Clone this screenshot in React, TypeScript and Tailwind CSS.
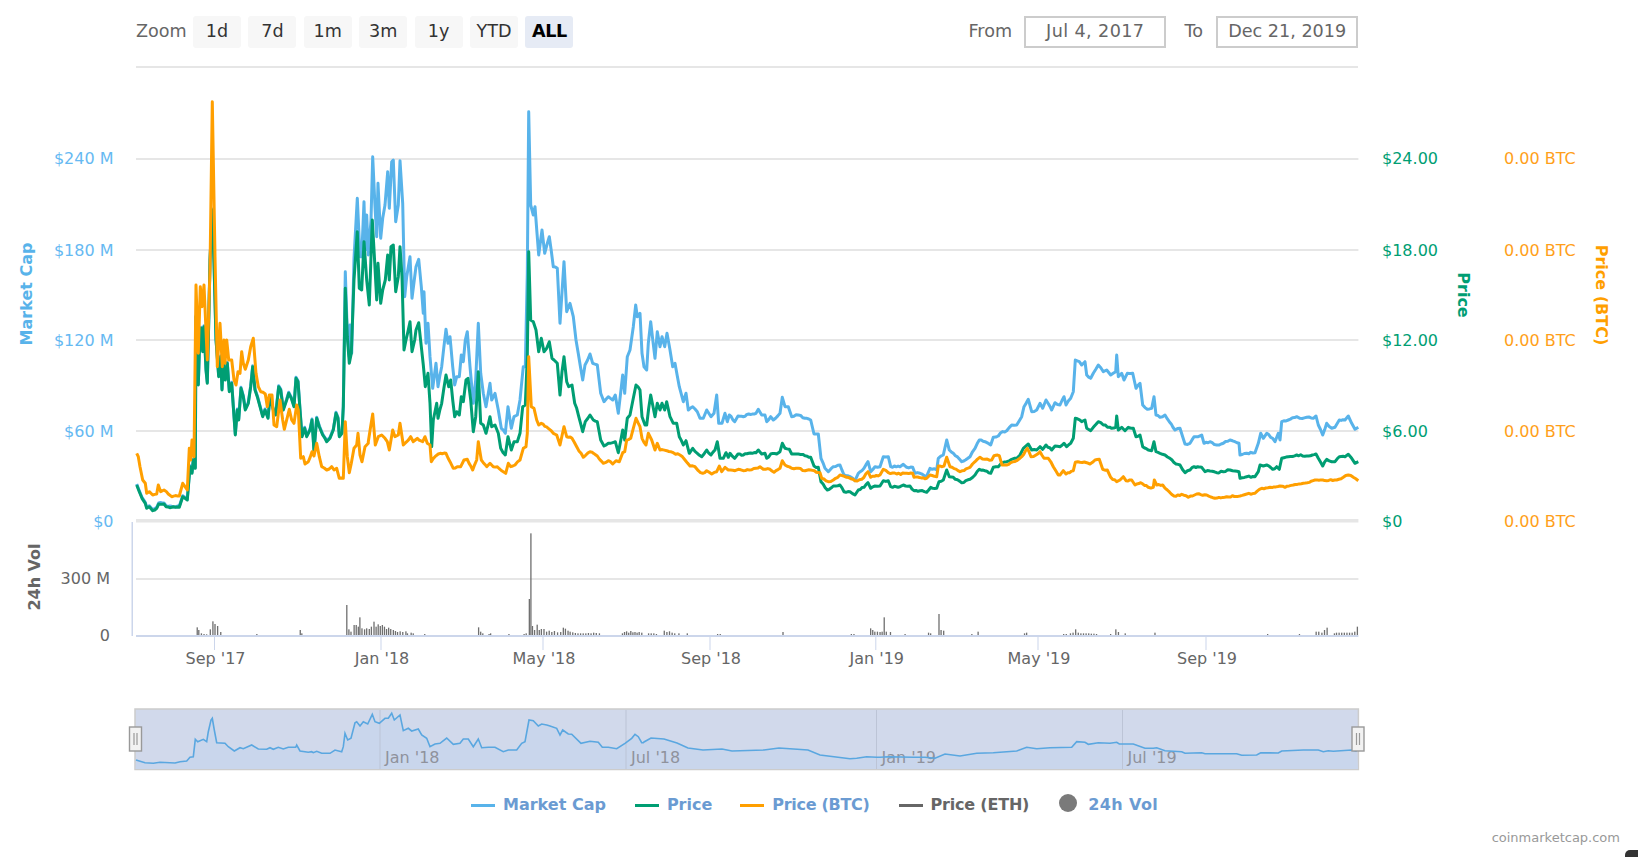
const seg = (x0: number, y0: number, f: number[]) => {
  const out: [number, number][] = [];
  for (let i = 0; i < f.length; i += 2) out.push([x0 + f[i] / 3, y0 + f[i + 1] / 3]);
  return out;
};
const toS = (p: [number, number][]) => p.map((q) => `${q[0].toFixed(1)},${q[1].toFixed(1)}`).join(" ");
// the traded series wobble a little between the traced points
const rough = (p: [number, number][], salt: number) => {
  const out: [number, number][] = [];
  for (let i = 0; i < p.length - 1; i++) {
    const [x1, y1] = p[i];
    const [x2, y2] = p[i + 1];
    out.push([x1, y1]);
    const n = Math.floor((x2 - x1) / 1.7);
    for (let k = 1; k < n; k++) {
      const t = k / n;
      const w = Math.sin((x1 + t * (x2 - x1)) * 12.9898 + salt) * 43758.5453;
      out.push([x1 + t * (x2 - x1), y1 + t * (y2 - y1) + (w - Math.floor(w) - 0.5) * 1.5]);
    }
  }
  out.push(p[p.length - 1]);
  return toS(out);
};

const greenEarly = [20,1185,28,1205,36,1225,46,1240,50,1255,58,1250,68,1262,80,1255,86,1242,102,1242,108,1250,125,1252,148,1252,158,1220,165,1225,172,1230,180,1130,186,1150,190,1110,196,1135,198,680,205,885,208,790,214,715,218,785,222,710,228,840,232,880,236,700,240,510,247,360,252,520,258,750,266,860,272,800,276,900,280,815,286,870,292,820,298,905,305,880,310,950,316,1035,322,960,326,990,333,895,340,920,346,960,355,940,362,890,368,830,375,900,382,920,390,950,398,980,405,960,414,985,420,920,430,960,437,975,446,890,452,900,460,960,470,930,476,910,484,925,492,950,498,865,504,875,510,960,516,1040,524,1015,530,1040,540,1020,546,990,552,1085,560,985,568,1010,578,1035,590,1055,600,1045,610,1020,618,970,624,985,628,1040,636,1030,640,950];

const green = rough([
  ...seg(130, 90, greenEarly),
  ...seg(130, 90, [646,595,652,740,658,820,664,790]),
  ...seg(340, 140, [42,420,52,275,58,445,65,450,72,305,80,420,88,495,97,240,103,345,110,480,114,370,122,490,128,450,136,420,143,345,148,420,153,320,160,315,167,455,175,410,180,320,186,410,192,630,198,600,210,545,216,635,224,600,228,570,236,548,244,620,250,675,256,740,264,700,270,790,275,920,280,840,290,790,294,835,305,790,318,705,326,740,332,720,338,780,344,830,350,815,358,825,364,770,370,785,378,720,384,715,392,780,400,875,407,830,415,695,422,850,430,855,438,880,450,830,455,860,465,855,475,880,482,925,496,945,504,890,514,930,522,905,532,905,540,880,548,800,556,795,562,650,566,335,572,540,580,545,588,570,596,635,604,595,612,635,620,625,628,605,636,655,642,660,652,670,660,765,666,695,672,650,680,725,686,740,696,735,704,790,710,805]),
  ...seg(510, 100, [218,995,226,965,240,945,250,960,262,965,272,1020,282,1038,295,1030,316,1025,325,1058,338,990,344,1020,352,955,360,945,370,895,378,855,390,870,396,950,405,975,410,975,416,925,422,885,435,950,442,910,450,930,456,910,464,930,470,905,480,950,490,970,500,970,508,1010,520,1035,528,1022,538,1060,548,1045,562,1060,575,1070,590,1050,603,1065,615,1050,622,1025,630,1075,640,1075,648,1058,655,1072,660,1060,674,1075,684,1062,700,1065,716,1060]),
  ...seg(740, 360, [48,278,55,270,65,282,75,280,80,295,92,282,110,282,120,275,127,250,135,265,148,268,155,282,175,282,195,287,212,292,222,318,235,322,243,365,262,390,280,378,300,375,312,395,330,395,345,405,355,390,372,382,384,368,392,385,405,378,420,378,430,362,445,362,452,380,480,380,490,375,510,378,522,392,540,392,560,397,572,382,590,385,597,365,610,360,620,330,628,350,640,352,665,368,690,358,705,345,718,328,735,332,752,340,760,322,775,320,782,312,800,305,815,298,830,295,840,285,850,265,865,252,875,270,890,270,900,260,908,268,918,255,935,270,945,258]),
  ...seg(1050, 340, [30,320,42,310,50,320,62,310,70,295,76,235,95,245,105,240,110,265,122,272,130,262,145,245,160,255,185,265,197,262,200,228,205,270,215,262,225,272,235,262,250,265,258,290,270,285,278,320,295,330,305,332,312,305,318,335,330,340,345,345,360,355,378,372,390,375,405,398,420,390,432,380,455,382,465,395,480,393,500,398,520,395,540,390,555,393,567,395,570,415,590,410,615,410,625,395,630,375,640,378,650,375,668,388,680,380,688,388,695,355,715,350,740,345,770,348,798,342,805,355,818,378,830,358,845,365,855,365,868,350,885,350,895,343,905,355,915,370,925,365]),
], 1);

const blue = rough([
  ...seg(130, 89, greenEarly),
  ...seg(130, 90, [646,545,652,730,658,800,660,705,665,790]),
  ...seg(340, 140, [42,355,52,175,60,350,65,350,72,185,76,330,80,225,85,345,93,240,98,50,105,200,110,290,114,130,122,295,128,235,135,195,143,95,148,205,155,65,160,60,167,245,175,195,180,62,188,190,194,470,200,410,210,350,216,475,224,410,228,380,236,358,244,440,250,520,252,455,258,610,264,550,270,650,278,745,288,670,294,740,305,680,318,568,324,610,330,590,338,680,344,735,350,710,358,710,364,645,370,665,376,600,382,575,390,680,400,790,407,720,415,550,422,700,430,760,438,800,450,730,455,780,465,760,475,810,484,865,496,880,504,800,514,865,522,830,532,825,540,780,544,740,550,680,556,680,562,400,566,-85,572,195,580,225,585,200,596,345,606,270,614,340,628,290,640,380,652,385,660,550,672,365,680,515,690,490,700,530,708,600]),
  ...seg(510, 100, [218,840,225,795,240,762,248,790,262,795,272,880,282,905,295,890,308,900,316,885,325,940,338,825,344,880,352,770,360,750,370,680,377,615,382,650,390,640,396,760,402,800,410,810,415,730,422,665,435,775,442,695,450,740,456,710,464,740,471,700,480,750,488,800,495,790,508,860,520,905,528,880,535,930,548,920,562,935,570,955,580,955,590,930,603,950,612,940,620,885,626,970,636,970,645,940,652,965,658,945,674,965,684,948,700,950,716,942]),
  ...seg(740, 360, [48,160,55,148,65,165,75,165,80,185,92,170,100,180,120,160,127,112,135,140,145,140,155,170,175,165,195,175,212,180,222,222,235,222,243,295,255,325,265,335,280,320,300,315,312,345,330,350,345,362,355,340,372,325,384,305,392,335,405,320,420,320,430,290,445,290,452,320,480,320,490,313,500,322,518,322,525,340,540,340,560,348,570,325,590,330,595,295,610,285,620,240,628,270,640,280,665,305,690,290,705,265,718,240,735,245,752,255,760,232,775,228,782,218,800,212,815,195,830,195,838,182,845,170,852,140,865,118,875,155,890,150,900,130,908,145,918,120,935,150,945,128]),
  ...seg(1050, 340, [30,195,42,170,48,195,62,175,70,155,76,60,88,65,95,75,105,65,110,105,122,115,130,100,145,75,160,95,170,90,182,105,197,95,200,45,205,110,215,100,222,120,232,100,248,100,258,145,270,130,278,195,292,208,305,205,312,170,318,225,330,232,345,225,358,245,375,270,390,265,405,312,420,310,432,290,445,290,455,285,462,310,480,305,500,315,520,310,540,300,555,305,567,310,570,345,590,340,615,338,625,310,632,280,640,295,650,280,668,295,675,305,685,280,690,300,695,245,715,240,740,230,750,235,770,232,790,235,798,228,805,255,818,285,830,250,845,265,855,262,868,240,885,240,895,228,905,250,915,268,925,262]),
], 2);

const orange = rough([
  ...seg(130, 90, [20,1090,25,1100,30,1130,38,1170,46,1180,50,1210,58,1205,68,1215,80,1212,85,1185,92,1205,102,1200,115,1212,125,1220,148,1218,158,1180,165,1190,172,1200,178,1075,182,1110,186,1050,192,1100,198,585,205,790,211,590,216,650,222,585,232,810,240,540,247,35,255,500,262,830,270,700,277,830,282,750,285,820,290,750,296,810,305,810,312,870,318,885,324,845,330,850,335,785,340,820,346,838,355,810,362,770,370,745,378,850,385,890,392,905,406,912,412,950,418,915,426,915,432,1005,440,1010,450,930,458,990,463,1018,478,958,485,990,492,1000,500,945,505,960,512,1105,520,1100,525,1122,535,1115,546,1085,552,1098,560,1060,568,1100,575,1130,590,1140,605,1130,612,1140,620,1135,628,1165,640,1165,646,995,652,1100,658,1148,664,1120,672,1075,680,1065,684,1030,690,1095,696,1115,705,1070,715,1060]),
  ...seg(340, 140, [85,905,98,822,106,915,115,890,125,885,135,895,142,905,148,930,158,870,165,890,175,885,180,850,190,915,200,905,212,890,220,905,232,895,248,905,255,890,262,910,270,915,274,965,285,950,295,942,318,940,330,965,340,985,352,980,362,980,372,960,382,958,398,990,410,960,415,905,424,960,440,980,450,970,460,980,472,980,490,995,497,1000,505,970,512,980,525,975,540,960,550,925,558,920,562,880,566,650,574,800,582,805,590,840,596,855,604,850,625,865,640,880,650,885,660,915,672,860,680,890,696,895,710,920]),
  ...seg(510, 100, [220,1072,240,1055,262,1068,280,1090,295,1082,308,1092,318,1082,328,1085,338,1058,344,1055,350,1020,362,1015,370,985,378,955,390,980,396,1015,408,1035,415,1000,425,1020,435,1050,442,1030,450,1050,470,1052,490,1058,510,1065,525,1080,540,1098,555,1100,565,1112,578,1120,590,1112,605,1122,620,1115,628,1098,635,1115,645,1102,655,1110,675,1112,685,1108,700,1112,718,1110]),
  ...seg(740, 360, [48,325,60,320,70,328,90,328,102,337,120,325,127,302,135,315,155,325,175,325,195,332,212,330,240,338,245,355,265,365,280,360,300,345,320,352,345,362,365,358,384,335,392,352,420,345,430,328,445,338,470,342,500,340,518,340,522,352,560,355,570,345,590,350,595,318,612,318,620,292,630,320,660,335,690,322,705,305,720,292,735,298,755,300,762,287,778,287,786,315,800,315,830,302,845,290,862,265,873,290,888,285,900,275,912,295,925,295,940,320,955,345]),
  ...seg(1050, 340, [30,405,40,392,48,402,70,392,76,367,90,367,110,368,120,372,135,360,148,358,158,388,172,390,182,412,200,425,210,420,220,410,228,422,245,420,255,435,272,428,295,442,310,442,313,420,320,435,338,435,352,450,372,468,395,463,415,472,440,462,470,465,495,475,530,470,570,468,590,462,615,460,635,445,660,442,690,438,705,442,730,435,760,430,795,420,830,422,860,420,880,412,895,405,910,412,925,422]),
], 3);

const navPts: [number, number][] = [
  ...seg(125, 700, [33,180,60,188,85,190,105,187,150,189,165,185,185,183,195,172,205,170,211,118,218,125,235,118,245,125,250,95,258,60,262,55,268,90,275,128,300,130,310,140,328,153,345,143,355,146,380,135,400,147,425,148,435,143,445,148,460,142,475,147,490,142,512,142,515,135,525,153,550,157,560,155,565,158,575,154,590,160,615,160,630,150,650,155,655,140,660,100,668,120,678,115,690,68,695,65,705,78,715,65,728,72,742,43,750,65,763,70,780,55,790,55,800,40,808,60,825,45,835,92,850,85,860,93,880,87,890,105,905,115,915,140,930,132,945,130,965,114,985,133,1005,130,1015,117,1030,117,1045,140,1060,117,1070,143,1090,142,1110,142,1135,155,1150,150,1175,150,1190,130,1200,125,1212,60,1225,62,1240,78,1250,72,1265,75,1275,78,1295,85,1305,105,1313,90,1330,102,1340,103,1368,130,1395,124,1420,127,1432,142,1450,142,1475,146,1500,130,1520,115,1530,103,1540,110,1550,128,1555,128]),
  [644,742],[651,738],[664,739],[677,743],[688,748],[703,750],[722,749],[732,751],[764,750],[779,748],[808,750],[820,755],[836,757],[850,758.7],
  ...seg(850, 700, [20,175,50,170,80,172,90,172,115,170,190,172,225,172,255,175,285,162,330,168,380,160,430,158,500,153,530,142,560,146,600,143,665,142,680,125,705,127,715,133,745,128,780,130,800,127,808,132,850,132,885,145,910,145,920,143,945,152,995,155,1005,160,1055,158,1065,161,1160,161,1175,166,1220,165,1232,158,1285,159,1295,153,1360,150,1405,150,1420,155,1435,152,1450,154,1505,150,1520,154]),
];

const volL = [377,592,380,600,385,610,390,612,395,613,402,598,407,574,411,582,416,588,422,606,491,612,574,600,577,610,663,525,667,598,671,605,677,585,681,585,685,590,688,562,692,595,697,598,701,595,706,597,710,590,715,575,719,590,723,583,727,588,731,585,735,590,739,597,743,593,747,597,752,600,756,603,760,606,765,604,770,606,776,604,779,610,786,608,790,610,812,612,915,592,919,605,923,610,935,612,938,610,973,612,1002,612,1006,610,1012,507,1015,310,1018,588,1022,600,1027,584,1031,600,1035,597,1040,597,1045,605,1050,602,1055,606,1060,603,1066,607,1072,606,1077,593,1081,596,1086,602,1090,605,1095,607,1100,609,1105,610,1110,610,1115,610,1120,610,1125,609,1130,610,1135,608,1140,609,1146,610,1190,610,1194,606,1198,604,1202,608,1206,603,1210,607,1214,606,1218,608,1222,606,1227,608,1240,610,1245,610,1250,610,1255,612,1270,602,1275,606,1280,604,1285,608,1290,610,1298,610,1314,610,1372,612,1377,612,1497,606];
const volR = [60,612,65,612,97,595,101,600,105,605,110,605,115,606,119,605,123,562,127,605,135,606,163,612,208,608,212,610,228,552,232,600,237,602,291,612,303,605,392,610,396,608,467,612,472,612,480,610,485,608,490,598,495,608,500,610,505,610,510,610,515,610,520,611,525,611,530,612,557,612,567,598,572,606,585,610,642,608,858,612,919,612,951,605,956,605,962,608,967,600,972,593,986,610,990,608,995,608,1000,608,1005,608,1010,608,1015,608,1020,608,1025,605,1030,590];
const bars: { x: number; top: number }[] = [];
for (let i = 0; i < volL.length; i += 2) bars.push({ x: volL[i] / 1.912, top: 430 + volL[i + 1] / 3 });
for (let i = 0; i < volR.length; i += 2) bars.push({ x: 820 + volR[i] / 1.9169, top: 430 + volR[i + 1] / 3 });

const gridY = [159, 250, 340, 431];
const labelY = [158, 250, 340, 431];
const leftLabels = ["$240 M", "$180 M", "$120 M", "$60 M"];
const greenLabels = ["$24.00", "$18.00", "$12.00", "$6.00"];
const xTicks: [number, string][] = [[214.5, "Sep '17"], [381, "Jan '18"], [543, "May '18"], [710, "Sep '18"], [875.8, "Jan '19"], [1038, "May '19"], [1206, "Sep '19"]];
const navTicks: [number, string][] = [[380, "Jan '18"], [626, "Jul '18"], [876.5, "Jan '19"], [1122.5, "Jul '19"]];
const zoomBtns = ["1d", "7d", "1m", "3m", "1y", "YTD"];

const C = { blue: "#58b3ea", green: "#009e73", orange: "#ff9f00" };

function Handle({ x }: { x: number }) {
  return (
    <g>
      <rect x={x} y={727} width={12} height={24} fill="#f2f2f2" stroke="#999" strokeWidth={1.4} />
      <path d={`M${x + 4.5} 733V745M${x + 7.5} 733V745`} stroke="#999" strokeWidth={1.2} fill="none" />
    </g>
  );
}

function Legend({ color, label, text, line, track }: { color: string; label: string; text: string; line?: boolean; track: string }) {
  return (
    <div className="flex items-center gap-[8px]">
      {line !== false ? (
        <span className="block w-[24px] h-[3px]" style={{ backgroundColor: color }} />
      ) : (
        <span className="block w-[18px] h-[18px] rounded-full -mt-[4px] mr-[3px]" style={{ backgroundColor: color }} />
      )}
      <span className={`text-[16px] font-bold leading-[24px] ${track}`} style={{ color: text }}>{label}</span>
    </div>
  );
}

export default function App() {
  return (
    <div className="relative w-[1638px] h-[857px] overflow-hidden bg-white font-['DejaVu_Sans',sans-serif]">
      <div className="flex items-center ml-[136px] w-[1222.4px] h-[32px] translate-y-[16px] text-[17.6px] text-[#666]">
        <span className="w-[57px] pb-[2px]">Zoom</span>
        <div className="flex gap-[7.4px]">
          {zoomBtns.map((b) => (
            <span key={b} className="flex w-[48px] h-[32px] pb-[2px] items-center justify-center rounded-[3px] bg-[#f7f7f7] text-[#333]">{b}</span>
          ))}
          <span className="flex w-[48px] h-[32px] pb-[2px] items-center justify-center rounded-[3px] bg-[#e6ebf5] font-bold tracking-[-0.5px] text-black">ALL</span>
        </div>
        <span className="ml-auto mr-[12px] pb-[2px]">From</span>
        <span className="flex w-[142.4px] h-[32px] pb-[2px] items-center justify-center border-2 border-[#ccc] tracking-[0.4px]">Jul 4, 2017</span>
        <span className="ml-[18px] mr-[13px] pb-[2px]">To</span>
        <span className="flex w-[142.4px] h-[32px] pb-[2px] items-center justify-center border-2 border-[#ccc]">Dec 21, 2019</span>
      </div>
      <div className="mt-[34px] ml-[136px] w-[1222.4px] h-[2px] bg-[#e6e6e6]" />

      <svg viewBox="0 68 1638 712" width={1638} height={712} className="block">
        {gridY.map((y) => <rect key={y} x={136} y={y - 1} width={1222.4} height={2} fill="#e6e6e6" />)}
        <rect x={136} y={519} width={1222.4} height={3.5} fill="#e6e6e6" />
        <rect x={136} y={578} width={1222.4} height={2} fill="#e6e6e6" />

        <polyline points={blue} fill="none" stroke={C.blue} strokeWidth={3} strokeLinejoin="round" />
        <polyline points={green} fill="none" stroke={C.green} strokeWidth={3} strokeLinejoin="round" />
        <polyline points={orange} fill="none" stroke={C.orange} strokeWidth={3} strokeLinejoin="round" />

        {labelY.map((y, i) => (
          <g key={y} className="text-[16px]">
            <text x={113.5} y={y} textAnchor="end" dominantBaseline="central" className="fill-[#66b9f2]">{leftLabels[i]}</text>
            <text x={1382} y={y} dominantBaseline="central" className="fill-[#009e73]">{greenLabels[i]}</text>
            <text x={1504} y={y} dominantBaseline="central" className="fill-[#ff9f1a]">0.00 BTC</text>
          </g>
        ))}
        <g className="text-[16px]">
          <text x={113.5} y={521} textAnchor="end" dominantBaseline="central" className="fill-[#66b9f2]">$0</text>
          <text x={1382} y={521} dominantBaseline="central" className="fill-[#009e73]">$0</text>
          <text x={1504} y={521} dominantBaseline="central" className="fill-[#ff9f1a]">0.00 BTC</text>
          <text x={110} y={578} textAnchor="end" dominantBaseline="central" className="fill-[#666]">300 M</text>
          <text x={110} y={635} textAnchor="end" dominantBaseline="central" className="fill-[#666]">0</text>
        </g>

        <g className="text-[16px] font-bold">
          <text transform="rotate(-90 26 294)" x={26} y={294} textAnchor="middle" dominantBaseline="central" className="fill-[#58b3ea]">Market Cap</text>
          <text transform="rotate(-90 34.5 577)" x={34.5} y={577} textAnchor="middle" dominantBaseline="central" className="fill-[#666]">24h Vol</text>
          <text transform="rotate(90 1463 295)" x={1463} y={295} textAnchor="middle" dominantBaseline="central" className="fill-[#009e73]">Price</text>
          <text transform="rotate(90 1601 295)" x={1601} y={295} textAnchor="middle" dominantBaseline="central" className="fill-[#ff9f00]">Price (BTC)</text>
        </g>

        <rect x={131.5} y={522} width={1.5} height={114} fill="#ccd6eb" />
        <rect x={136} y={635} width={1222.4} height={2} fill="#ccd6eb" />
        {bars.map((b, i) => <rect key={i} x={b.x - 0.6} y={b.top} width={1.3} height={Math.max(635 - b.top, 0)} fill="#6f6f6f" />)}
        {xTicks.map(([x, l]) => (
          <g key={l}>
            <rect x={x - 0.5} y={636} width={1} height={14} fill="#ccd6eb" />
            <text x={x + 1} y={658} textAnchor="middle" dominantBaseline="central" className="text-[16px] fill-[#666]">{l}</text>
          </g>
        ))}

        <rect x={135} y={709} width={1223.4} height={60.5} fill="#d1d9eb" stroke="#cccccc" strokeWidth={1.5} />
        <polygon points={`135.5,769 ${toS(navPts)} 1358,769`} fill="#c9d6ec" />
        {navTicks.map(([x, l]) => (
          <g key={l}>
            <rect x={x - 0.5} y={710} width={1} height={59} fill="#bcc4d6" />
            <text x={x + 5} y={757} dominantBaseline="central" className="text-[16px] fill-[#8f929c]">{l}</text>
          </g>
        ))}
        <polyline points={toS(navPts)} fill="none" stroke="#5aa7e0" strokeWidth={1.6} />
        <Handle x={129.5} />
        <Handle x={1352} />
      </svg>

      <div className="flex items-center mt-[13px] ml-[471px] h-[24px]">
        <Legend color={C.blue} label="Market Cap" text="#6b9bd2" track="" />
        <div className="ml-[29px]"><Legend color={C.green} label="Price" text="#6b9bd2" track="" /></div>
        <div className="ml-[28px]"><Legend color={C.orange} label="Price (BTC)" text="#6b9bd2" track="tracking-[-0.3px]" /></div>
        <div className="ml-[29px]"><Legend color="#666" label="Price (ETH)" text="#666" track="tracking-[-0.2px]" /></div>
        <div className="ml-[30px]"><Legend color="#7a7a7a" label="24h Vol" text="#6b9bd2" track="tracking-[0.4px]" line={false} /></div>
      </div>

      <div className="flex justify-end mt-[11px] pr-[18px] text-[13px] leading-[20px] text-[#999]">coinmarketcap.com</div>
      <div className="absolute right-0 bottom-0 w-[13px] h-[7px] rounded-tl-[5px] bg-[#333]" />
    </div>
  );
}
